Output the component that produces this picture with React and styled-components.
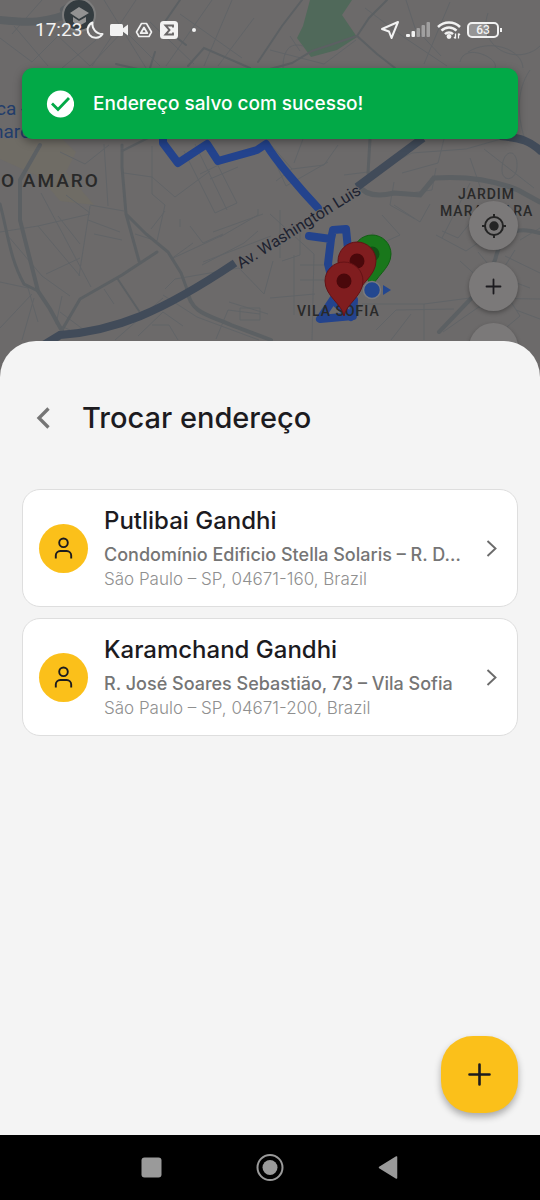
import styled, { createGlobalStyle } from "styled-components";

const addresses = [
    {
        id: 1,
        name: "Putlibai Gandhi",
        street: "Condomínio Edificio Stella Solaris – R. D…",
        city: "São Paulo – SP, 04671-160, Brazil",
    },
    {
        id: 2,
        name: "Karamchand Gandhi",
        street: "R. José Soares Sebastião, 73 – Vila Sofia",
        city: "São Paulo – SP, 04671-200, Brazil",
    },
];

export default function App() {
    return (
        <>
            <GlobalStyle />
            <Screen>
                <MapArea>
                    <MapDrawing />
                    <MapControls>
                        <MapButton aria-label="Minha localização">
                            <LocateIcon />
                        </MapButton>
                        <MapButton aria-label="Aproximar">
                            <PlusIcon size={17} stroke={1.8} />
                        </MapButton>
                        <MapButton aria-label="Afastar" />
                    </MapControls>
                    <StatusBar />
                    <Toast role="status">
                        <CheckIcon />
                        <ToastText>Endereço salvo com sucesso!</ToastText>
                    </Toast>
                </MapArea>
                <Sheet>
                    <Header>
                        <BackButton aria-label="Voltar">
                            <svg width="14" height="22" viewBox="0 0 14 22">
                                <path d="M12.500 1.500 3 11l9.500 9.500" fill="none" stroke="#757575" strokeWidth="3.300" />
                            </svg>
                        </BackButton>
                        <Title>Trocar endereço</Title>
                    </Header>
                    <List>
                        {addresses.map((address) => (
                            <li key={address.id}>
                                <AddressCard {...address} />
                            </li>
                        ))}
                    </List>
                    <AddButton aria-label="Adicionar endereço">
                        <PlusIcon size={23} stroke={2.6} />
                    </AddButton>
                </Sheet>
                <NavBar>
                    <NavButton aria-label="Recentes">
                        <svg width="28" height="28" viewBox="0 0 28 28">
                            <rect x="3.500" y="3.500" width="20" height="20" rx="3" fill="#9a9a9a" />
                        </svg>
                    </NavButton>
                    <NavButton aria-label="Início">
                        <svg width="28" height="28" viewBox="0 0 28 28">
                            <circle cx="14" cy="13.500" r="12.500" fill="none" stroke="#9a9a9a" strokeWidth="2" />
                            <circle cx="14" cy="13.500" r="7.500" fill="#9a9a9a" />
                        </svg>
                    </NavButton>
                    <NavButton aria-label="Voltar">
                        <svg width="28" height="28" viewBox="0 0 28 28">
                            <path d="M5.500 13.500 22.500 3v21z" fill="#9a9a9a" stroke="#9a9a9a" strokeWidth="1.500" strokeLinejoin="round" />
                        </svg>
                    </NavButton>
                </NavBar>
            </Screen>
        </>
    );
}

function AddressCard({ name, street, city }) {
    return (
        <Card>
            <Avatar>
                <svg width="20" height="24" viewBox="0 0 20 24" fill="none" stroke="#1c1b1f" strokeWidth="1.900">
                    <circle cx="9.500" cy="6.800" r="4.300" />
                    <path d="M1.800 22.500V19.500a4.500 4.500 0 0 1 4.500-4.500h6.400a4.500 4.500 0 0 1 4.500 4.500v3" />
                </svg>
            </Avatar>
            <Info>
                <Name>{name}</Name>
                <Street>{street}</Street>
                <City>{city}</City>
            </Info>
            <svg width="20" height="20" viewBox="0 0 20 20">
                <path d="m6.500 3 8 7.500-8 7.500" fill="none" stroke="#6b6b6b" strokeWidth="1.900" />
            </svg>
        </Card>
    );
}

function StatusBar() {
    return (
        <Status>
            <StatusGroup>
                <Clock>17:23</Clock>
                <svg width="20" height="20" viewBox="0 0 20 20">
                    <path d="M6.500 2.500A8 8 0 1 0 16.500 14 10 10 0 0 1 6.500 2.500z" fill="none" stroke="#f2f2f2" strokeWidth="2" strokeLinejoin="round" />
                </svg>
                <svg width="20" height="20" viewBox="0 0 20 20" fill="#f2f2f2">
                    <rect x="0" y="4" width="13" height="12" rx="1.500" />
                    <path d="m12 9 6-4.500v11L12 11z" />
                </svg>
                <svg width="20" height="20" viewBox="0 0 20 20" fill="none" stroke="#f2f2f2" strokeWidth="1.600" strokeLinejoin="round">
                    <path d="M7.500 3.500h5l5 8.500-2.500 4.500H5L2.500 12z" />
                    <path d="m10 7.500 3.300 5.700H6.700z" strokeWidth="1.800" />
                </svg>
                <svg width="20" height="20" viewBox="0 0 20 20">
                    <rect x="2" y="1" width="18" height="18" rx="3.500" fill="#f2f2f2" />
                    <path d="M15 7.500V5.500H7.500l4 4.500-4 4.500H15v-2" fill="none" stroke="#686667" strokeWidth="1.900" />
                </svg>
                <Dot />
            </StatusGroup>
            <StatusGroup $wide>
                <svg width="20" height="20" viewBox="0 0 20 20">
                    <path d="M18 2 11.500 18 9 11.500 2 9z" fill="none" stroke="#f2f2f2" strokeWidth="2" strokeLinejoin="round" />
                </svg>
                <svg width="25" height="20" viewBox="0 0 25 20" fill="#f2f2f2">
                    <rect x="0" y="14" width="4" height="3" rx="1" />
                    <rect x="5.500" y="11" width="3.500" height="6" rx="1" />
                    <rect x="10.500" y="8" width="3.500" height="9" rx="1" opacity=".4" />
                    <rect x="15.500" y="5" width="3.500" height="12" rx="1" opacity=".4" />
                    <rect x="20.500" y="2" width="3.500" height="15" rx="1" opacity=".4" />
                </svg>
                <svg width="24" height="20" viewBox="0 0 24 20" fill="none" stroke="#f2f2f2" strokeWidth="2.500">
                    <path d="M1 7a15.500 15.500 0 0 1 22 0" />
                    <path d="M4.500 10.700a10.500 10.500 0 0 1 15 0" />
                    <path d="M8 14.200a5.500 5.500 0 0 1 8 0" />
                    <circle cx="12" cy="16.500" r="1.200" />
                    <path d="M18.500 13.500v5m-1.500-1.500 1.500 1.500m3 0v-5m1.500 1.500-1.500-1.500" strokeWidth="1.300" />
                </svg>
                <Battery>63</Battery>
            </StatusGroup>
        </Status>
    );
}

function CheckIcon() {
    return (
        <svg width="28" height="28" viewBox="0 0 28 28">
            <circle cx="14.500" cy="14" r="13.600" fill="#fff" />
            <path d="m6 13.500 6 6L23 8" fill="none" stroke="#02a947" strokeWidth="2.800" />
        </svg>
    );
}

function LocateIcon() {
    return (
        <svg width="26" height="26" viewBox="0 0 26 26" fill="none" stroke="#242424" strokeWidth="2">
            <circle cx="13" cy="13" r="9" />
            <circle cx="13" cy="13" r="4.700" fill="#242424" stroke="none" />
            <path d="M13 1v4m0 16v4M1 13h4m16 0h4" />
        </svg>
    );
}

function PlusIcon({ size, stroke }) {
    return (
        <svg width={size} height={size} viewBox={`0 0 ${size} ${size}`}>
            <path
                d={`M${size / 2} 1.500v${size - 3}M1.500 ${size / 2}h${size - 3}`}
                stroke="#1c1b1f"
                strokeWidth={stroke}
                strokeLinecap="round"
            />
        </svg>
    );
}

function Pin({ x, y, fill, edge, dot }) {
    return (
        <g transform={`translate(${x} ${y})`}>
            <path
                d="M0 35C-2 23-19 15-19 0a19 19 0 0 1 38 0C19 15 2 23 0 35z"
                fill={fill}
                stroke={edge}
            />
            <circle r="7.500" fill={dot} />
        </g>
    );
}

function MapDrawing() {
    return (
        <MapSvg viewBox="0 0 540 377" preserveAspectRatio="xMidYMin slice" aria-hidden="true">
            <rect width="540" height="377" fill="#6c6a6a" />
            <path d="M310 0h42l-10 15 15 22-20 13-26 7-14-19 6-12z" fill="#50695a" />
            <path d="M0 139h62l14 13-10 20 28 33-34-4-20-24-40-18z" fill="#6f6c65" />

            {/* side streets */}
            <g fill="none" stroke="#616467" strokeWidth="1">
                <path d="M0 38 32 62 58 36 90 66 124 30 160 66M14 26 48 66M42 0 12 34M96 40 62 68M104 0l42 68M136 0 92 66M150 22l44 42M212 0l-46 66M180 14l62 44M232 0l-28 66M254 18l-36 48" />
                <path d="M0 232 38 226 90 214M8 236l34 40 28 20M38 226l42 50M58 216l22 28M90 206l-11 70M41 193l50 94M66 195l24 18M80 258l-34 16M0 282l28 6 10 34M0 328l32-34M62 296l-6 28 14 6M22 340l12-42M104 289l10 15M60 312l24 18" />
                <path d="M124 173l28 4 23 20 35-26M152 146v48l13 11-8 36-22-7M165 211l-14 18M90 205l34 6M104 144l4 62M60 152l25 12 24-19M94 234l28 6M88 220l32 12" />
                <path d="m184 151 31 62 22-10-30-59m-12 0 32 66m4-51-31 15m38-7-28 12m66-15 10 22 42-24M190 226l13 17 20-9M180 219v8M220 237l38-22 0-6M193 243l-22 16 52-24M202 265l42-22 14-12M213 232l50-18m-60 48 68-26" />
                <path d="m163 295 34 22 62 23m-94-51 10-10 64-11 25 26 9-33M216 339l12-29 32 4m-31-12 39 12M115 340l48-42m-25 38 25-24 20 14M152 325h17l9 15M240 308v12h20v-12z" />
                <path d="m272 146 20 23-16 12M292 169l32-4 14-20M303 139l-9 24m50 12 32-4 36-18 54-4 42-12M390 205l25 14m-25-14 4-23m0 23 26 17 10-18M404 194l28-4 4-22m8-29-6 24-36 10" />
                <path d="m436 235 30 16 38-26M442 238l28-55M478 252l20 24 32 12M442 231l16 7 20-25M460 261l20 18M502 170c0-22 16-22 15-4 0 15-15 17-15 4zm-18-21 50 39M470 158l12 34M520 240l20-12M505 256l35 17M515 250l-36 58" />
                <path d="m270 214 44 40-2 86M280 210v48M300 220v35l-18 6M300 265h26M300 280h26M294 255v60M270 298l45-4M362 304h62l46-6 70 1M376 330l20-20 58-1M391 340l20-26M424 304v36M390 246l-18-13M382 215l18 20-22 10M443 332l50-35M502 288l18 28-24 20M516 310l24 9" />
                <path d="m270 50 54 14 32-24M283 68c0-18 7-26 20-22M290 36l10 15M365 8l40 30 42 28M406 0l9 28 26 28M450 2l-26 62M460 62c4-20 40-4 35 6M468 52c22-14 54-3 55 16M488 13c-12 35 30 54 52 33M530 70c-15 22-12 48-5 70" />
            </g>
            <g fill="none" stroke="#5c6063" strokeLinecap="round">
                <path d="M0 20c28 3 45 4 79-10M64 10 82 0" strokeWidth="8" />
                <path d="M40 145 20 180v40l18 71 12 18 12 22" strokeWidth="4" />
                <path d="M0 204c8 30 10 55 24 80l14 7M122 145v22l4 47 13 47m-13-47 20 20 22 18 13 21 7 19M62 330l18-31 42-24 35-23" strokeWidth="3" />
                <path d="m117 278 22 33M122 151l28-14" strokeWidth="2" />
                <path d="M187 290c4 24 22 25 44 35l40 15" strokeWidth="4" />
                <path d="m150 68 5-16M188 66l16-18 46 20M186 45l-24-19 18-26M142 70l-26-6" strokeWidth="2" />
                <path d="M270 69l22-6 20-12 45-15 20 18 18 14M357 36l12-18 18-18M302 0l-20 26-24 36" strokeWidth="2" />
                <path d="M358 185c8 12 24 11 36 8l26 2 14-17c30-2 60 2 84 12l22 12" strokeWidth="5" />
                <path d="M540 233c-38-12-42 17-45 27l-12 26-44 46" strokeWidth="4" />
                <path d="M370 139l-2 34" strokeWidth="3" />
            </g>

            {/* avenue */}
            <g fill="none" stroke="#414b59" strokeWidth="8">
                <path d="M42 346 60 335c55-4 100-22 175-72M357 187l66-49M500 136c22 2 30 5 42 16" />
            </g>

            {/* route */}
            <g fill="none" stroke="#23438d" strokeWidth="8" strokeLinecap="round" strokeLinejoin="round">
                <path d="m163 139 0 4 15 20 29-19 11 17 39-11 9-6c10 17 35 46 52 64" />
                <path d="m309 236 22 3 2-9 13-1 2 20M331 239l-3 25 8 31-16 24 33-3 1-16M333 300l18 17" />
            </g>

            <g fontFamily="Roboto, sans-serif" fontWeight="500" fill="#292929">
                <text x="1" y="187" fontSize="19" letterSpacing="2">O AMARO</text>
                <text x="458" y="199" fontSize="14" letterSpacing="1">JARDIM</text>
                <text x="440" y="216" fontSize="14" letterSpacing="1">MARAJOARA</text>
                <text x="297" y="316" fontSize="14" letterSpacing="1">VILA SOFIA</text>
            </g>
            <text transform="translate(241 269) rotate(-32)" fontFamily="Roboto, sans-serif" fontSize="16" fill="#1d2230" stroke="#6c6a6a" strokeWidth="2" paintOrder="stroke">
                Av. Washington Luis
            </text>
            <g fontFamily="Roboto, sans-serif" fontSize="19" fill="#223d6b">
                <text x="-4" y="115">ca -</text>
                <text x="-7" y="138">naro</text>
            </g>

            <circle cx="79" cy="15" r="16" fill="#343c40" stroke="#7c7c7c" strokeWidth="2" />
            <path d="m70 13 9-6 10 6-10 6zm3 4v5l6 4 7-4v-5l-7 4z" fill="#929292" />

            <Pin x={372} y={254} fill="#19771b" edge="#115f13" dot="#115014" />
            <Pin x={357} y={261} fill="#801d1f" edge="#651215" dot="#4a080b" />
            <circle cx="372" cy="290" r="8.500" fill="#23478f" stroke="#7a7a7e" strokeWidth="1.500" />
            <path d="m383 285 8 5-8 5z" fill="#23478f" />
            <Pin x={344} y={281} fill="#801d1f" edge="#651215" dot="#4a080b" />
        </MapSvg>
    );
}

const GlobalStyle = createGlobalStyle`
    * {
        box-sizing: border-box;
    }
    body {
        margin: 0;
        font-family: 'Inter', 'Liberation Sans', sans-serif;
        background-color: #000;
    }
    button {
        border: none;
        padding: 0;
        background: none;
        font: inherit;
        cursor: pointer;
    }
    svg {
        flex-shrink: 0;
    }
`;

const Screen = styled.div`
    min-height: 100vh;
    display: flex;
    flex-direction: column;
`;

const MapArea = styled.section`
    position: relative;
    height: 377px;
    overflow: hidden;
`;

const MapSvg = styled.svg`
    position: absolute;
    inset: 0;
    width: 100%;
    height: 100%;
`;

const MapControls = styled.div`
    position: absolute;
    top: 201px;
    right: 22px;
    display: flex;
    flex-direction: column;
    gap: 12px;
`;

const MapButton = styled.button`
    width: 49px;
    height: 49px;
    border-radius: 50%;
    display: flex;
    align-items: center;
    justify-content: center;
    background-color: #7b7979;
    box-shadow: 0 2px 4px rgba(0, 0, 0, 0.3);
`;

const Status = styled.div`
    position: relative;
    height: 60px;
    padding: 0 41px 0 35px;
    display: flex;
    align-items: center;
    justify-content: space-between;
`;

const StatusGroup = styled.div`
    display: flex;
    align-items: center;
    gap: ${({ $wide }) => ($wide ? "6px" : "4px")};
`;

const Clock = styled.span`
    font-family: 'Roboto', sans-serif;
    font-size: 19px;
    line-height: 20px;
    color: #f2f2f2;
`;

const Dot = styled.span`
    width: 4px;
    height: 4px;
    margin-left: 10px;
    border-radius: 50%;
    background-color: #f2f2f2;
`;

const Battery = styled.span`
    position: relative;
    width: 32px;
    height: 16px;
    border: 2px solid #f2f2f2;
    border-radius: 5px;
    font-family: 'Roboto', sans-serif;
    font-size: 12px;
    font-weight: 500;
    line-height: 12px;
    text-align: center;
    color: #f2f2f2;
    background: linear-gradient(to right, #969595 63%, transparent 63%);
    &::after {
        content: '';
        position: absolute;
        top: 4px;
        right: -5px;
        width: 2px;
        height: 4px;
        background-color: #f2f2f2;
    }
`;

const Toast = styled.div`
    position: relative;
    min-height: 71px;
    margin: 8px 22px 0;
    padding: 0 24px;
    display: flex;
    align-items: center;
    gap: 19px;
    border-radius: 11px;
    background-color: #02a947;
    box-shadow: 0 3px 8px rgba(0, 0, 0, 0.35);
`;

const ToastText = styled.p`
    margin: 0;
    font-size: 19px;
    font-weight: 500;
    line-height: 24px;
    color: #fff;
`;

const Sheet = styled.main`
    position: relative;
    flex: 1;
    margin-top: -36px;
    padding: 53px 22px 22px;
    display: flex;
    flex-direction: column;
    border-radius: 36px 36px 0 0;
    background-color: #f4f4f4;
`;

const Header = styled.header`
    display: flex;
    align-items: center;
    gap: 18px;
    height: 48px;
    margin-bottom: 47px;
`;

const BackButton = styled.button`
    width: 42px;
    height: 42px;
    display: flex;
    align-items: center;
    justify-content: center;
`;

const Title = styled.h1`
    margin: 0;
    font-size: 29px;
    font-weight: 500;
    line-height: 40px;
    color: #1c1b1f;
`;

const List = styled.ul`
    margin: 0;
    padding: 0;
    display: flex;
    flex-direction: column;
    gap: 11px;
    list-style: none;
`;

const Card = styled.button`
    width: 100%;
    height: 118px;
    padding: 0 16px;
    display: flex;
    align-items: center;
    gap: 16px;
    text-align: left;
    border: 1px solid #dedede;
    border-radius: 18px;
    background-color: #fff;
`;

const Avatar = styled.span`
    width: 49px;
    height: 49px;
    flex-shrink: 0;
    display: flex;
    align-items: center;
    justify-content: center;
    border-radius: 50%;
    background-color: #fbc01a;
`;

const Info = styled.span`
    flex: 1;
    min-width: 0;
    display: flex;
    flex-direction: column;
`;

const Line = styled.span`
    overflow: hidden;
    text-overflow: ellipsis;
    white-space: nowrap;
`;

const Name = styled(Line)`
    font-size: 24px;
    font-weight: 500;
    line-height: 32px;
    margin-bottom: 6px;
    color: #1c1b1f;
`;

const Street = styled(Line)`
    font-size: 18px;
    font-weight: 500;
    line-height: 24px;
    color: #757575;
`;

const City = styled(Line)`
    font-size: 17px;
    font-weight: 300;
    line-height: 24px;
    color: #8f8f8f;
`;

const AddButton = styled.button`
    width: 77px;
    height: 77px;
    margin-top: auto;
    align-self: flex-end;
    display: flex;
    align-items: center;
    justify-content: center;
    border-radius: 32px;
    background-color: #fbc01a;
    box-shadow: 0 4px 7px rgba(0, 0, 0, 0.3);
`;

const NavBar = styled.nav`
    height: 65px;
    display: flex;
    align-items: center;
    justify-content: center;
    gap: 90px;
    background-color: #000;
`;

const NavButton = styled.button`
    display: flex;
`;
